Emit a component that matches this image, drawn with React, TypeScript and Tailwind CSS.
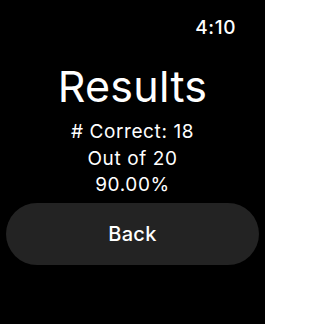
export default function App() {
  return (
    <div className="w-[265px] h-[324px] bg-black text-white flex flex-col font-['Inter','Noto_Sans',sans-serif]">
      <div className="flex justify-end pr-[29px] pt-[17px] h-[40px]">
        <span className="text-[19px] leading-[22px] font-medium tracking-[0.6px]">4:10</span>
      </div>
      <div className="flex flex-col items-center mt-[23px]">
        <h1 className="text-[43px] leading-[46px] font-normal tracking-[0.3px]">Results</h1>
        <div className="flex flex-col items-center text-[19px] leading-[26.5px] mt-[10px] tracking-[0.6px]">
          <span># Correct: 18</span>
          <span>Out of 20</span>
          <span>90.00%</span>
        </div>
      </div>
      <div className="px-[6px] mt-[4px]">
        <button className="w-full h-[62px] rounded-full bg-[#232323] text-[20px] font-medium tracking-[0.3px]">
          Back
        </button>
      </div>
    </div>
  );
}
